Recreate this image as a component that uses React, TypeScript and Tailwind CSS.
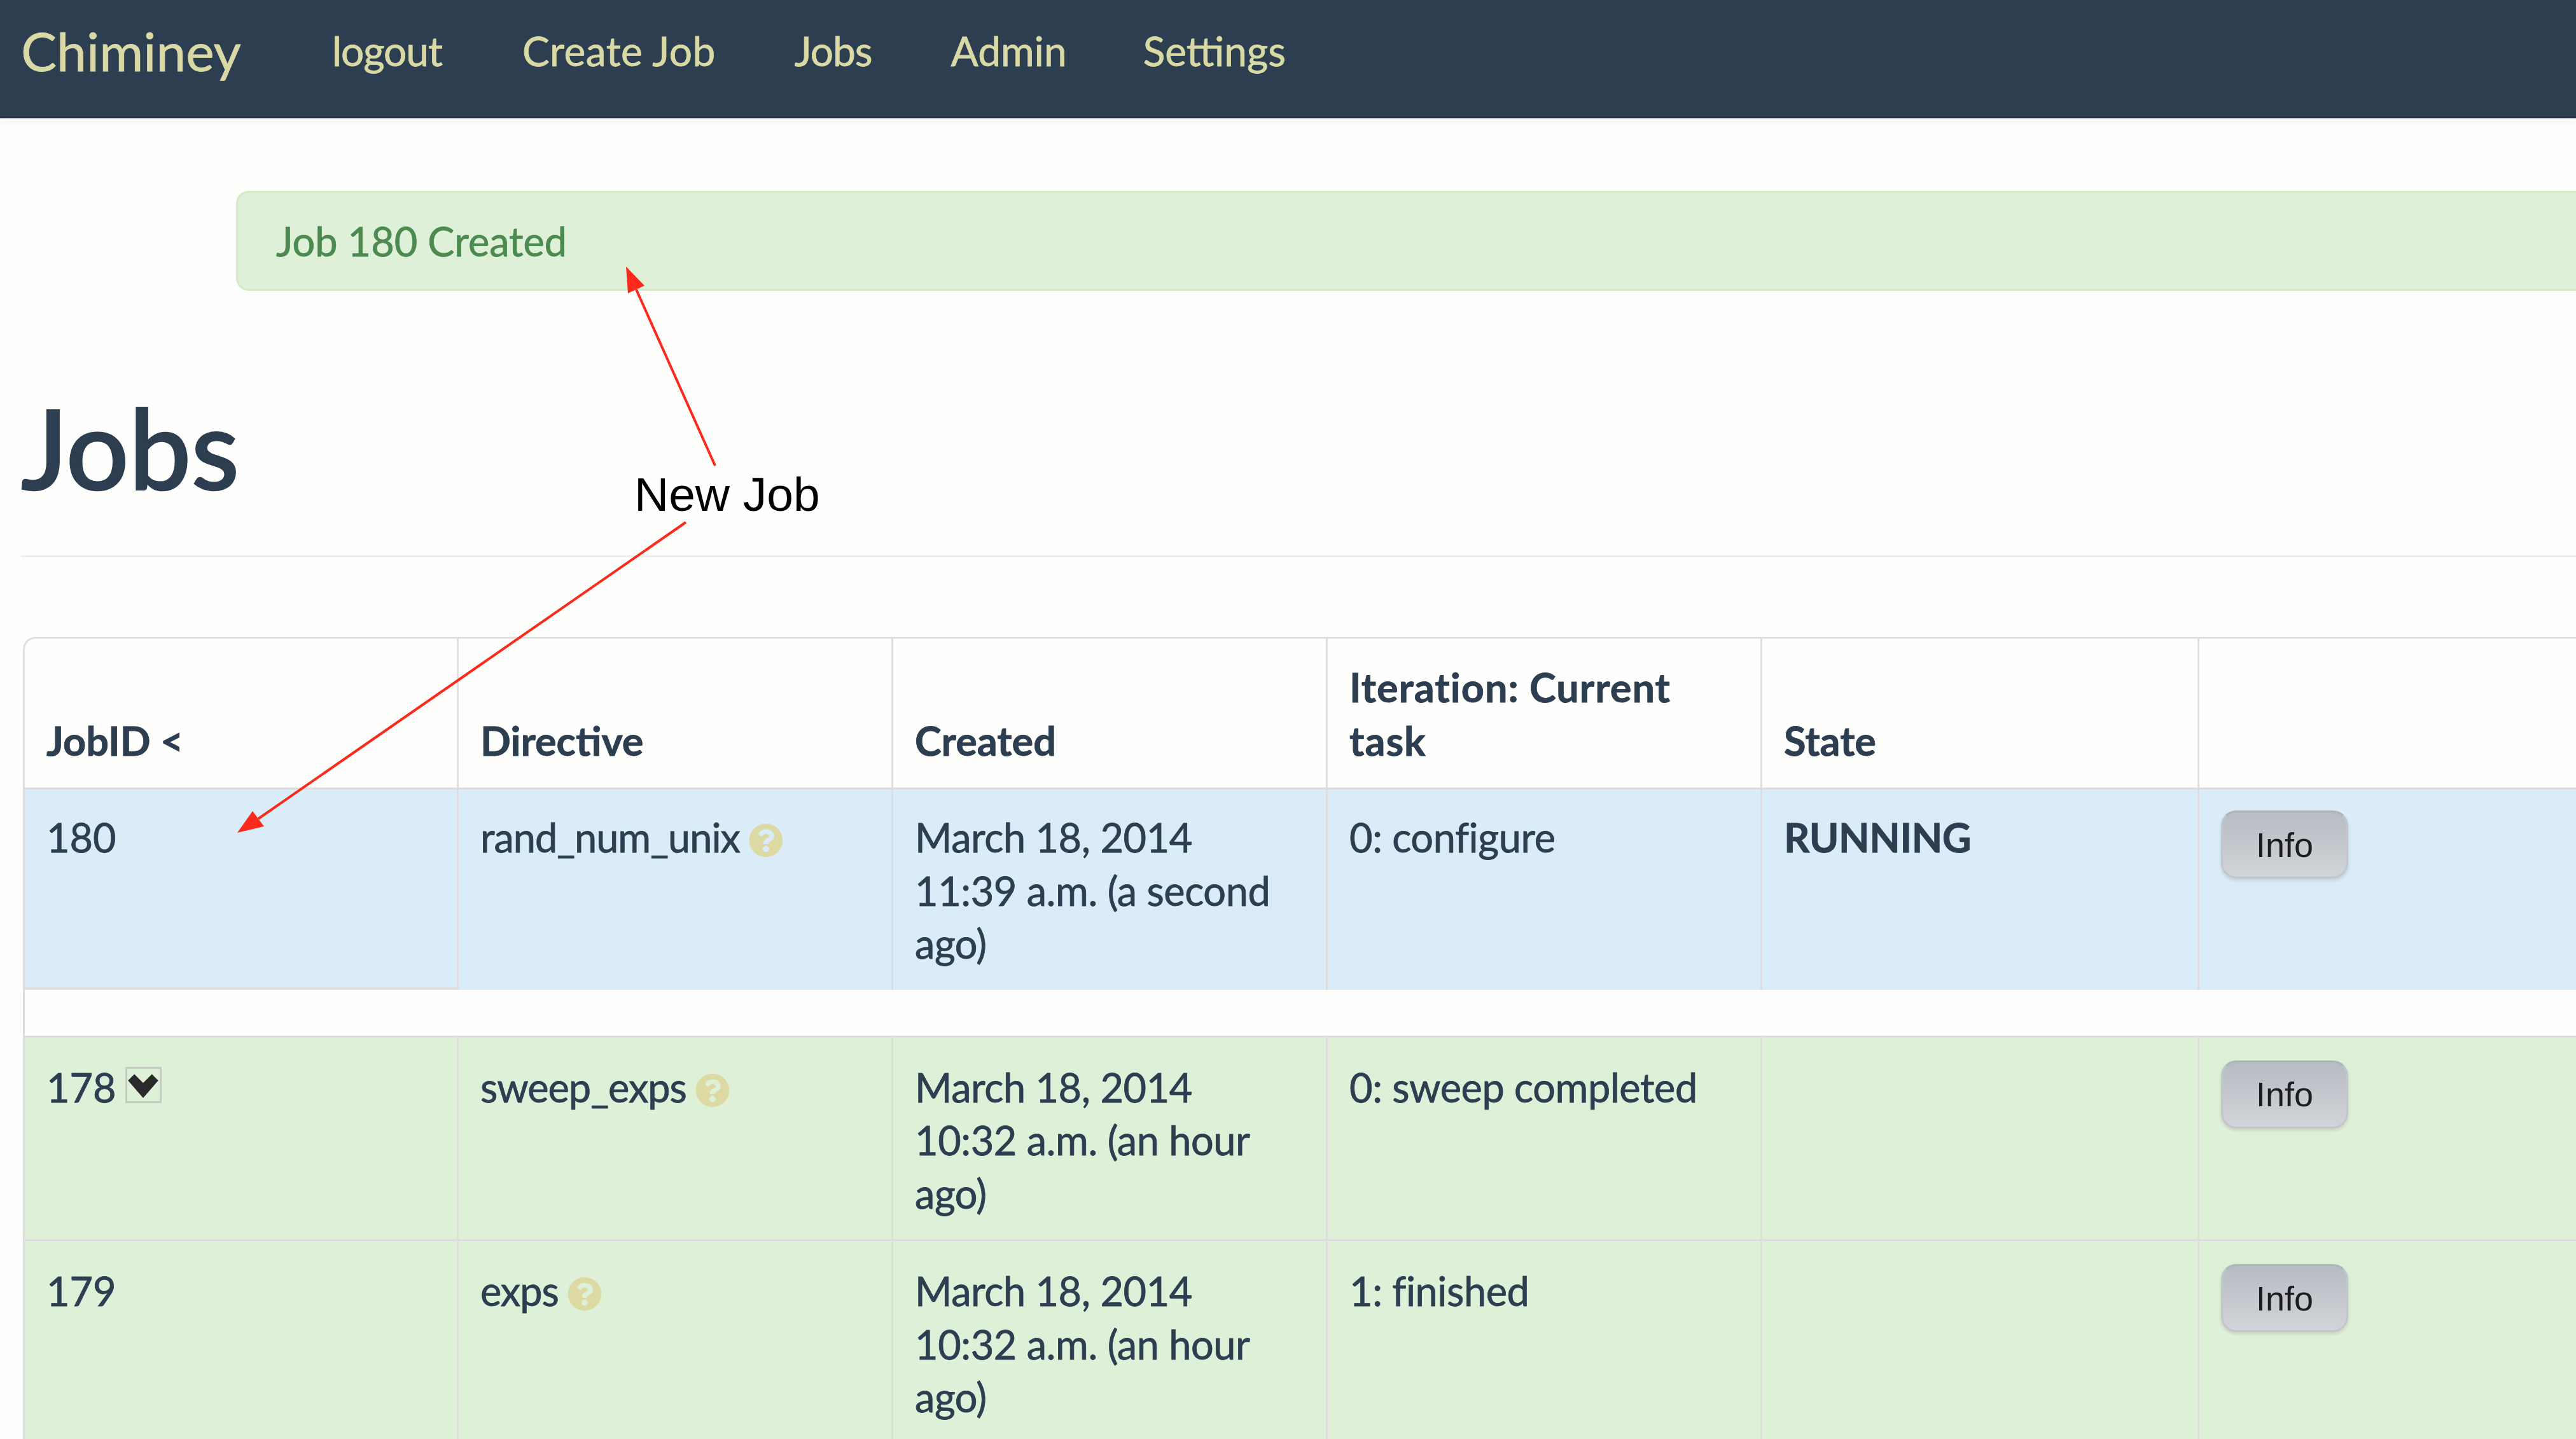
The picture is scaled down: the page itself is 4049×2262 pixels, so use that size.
import { FaQuestionCircle } from "react-icons/fa";

function Help() {
  return <FaQuestionCircle className="inline-block ml-[14px] w-[54px] h-[54px] text-[#dcd9a2] align-[-8px]" />;
}

function InfoButton() {
  return (
    <button className="w-[200px] h-[107px] rounded-[24px] border-[3px] border-[#c2c5ca] border-t-[#b0b3b9] bg-gradient-to-b from-[#b7bcc3] to-[#d1d4d8] shadow-[0_3px_5px_rgba(0,0,0,0.12)] text-[54px] leading-none text-[#1c1c1c] [font-family:'Liberation_Sans',sans-serif] [-webkit-text-stroke:0px]">
      Info
    </button>
  );
}

function Chevron() {
  return (
    <span className="inline-flex items-center justify-center w-[57px] h-[57px] ml-[14px] border-[3px] border-[#c8c8c8] align-[2px]">
      <svg viewBox="0 0 40 40" className="w-[50px] h-[50px]">
        <path d="M1 14 L9 6 L20 17 L31 6 L39 14 L20 36 Z" fill="#2a2a2a" />
      </svg>
    </span>
  );
}

const cell = "border-l-[3px] border-t-[3px] border-[#dddddd] px-[34px] pb-[31px] align-top";
const headCell = "border-l-[3px] border-t-[3px] border-[#e0e0e0] px-[34px] pb-[33px] align-bottom text-left font-bold";

type RowProps = {
  id: React.ReactNode;
  idCls?: string;
  pad: string;
  directive: string;
  created: string[];
  task: string;
  state?: string;
  bg: string;
};

function Row({ id, idCls = "", pad, directive, created, task, state, bg }: RowProps) {
  return (
    <tr className={bg}>
      <td className={`${cell} ${pad} ${idCls}`}>{id}</td>
      <td className={`${cell} ${pad}`}>
        <span className="tracking-[-1px]">{directive}</span>
        <Help />
      </td>
      <td className={`${cell} ${pad} tracking-[-0.4px]`}>
        {created.map((l) => (
          <div key={l}>{l}</div>
        ))}
      </td>
      <td className={`${cell} ${pad} tracking-[-0.4px]`}>{task}</td>
      <td className={`${cell} ${pad} font-bold tracking-[-0.4px]`}>{state}</td>
      <td className={`${cell} ${pad}`}>
        <InfoButton />
      </td>
    </tr>
  );
}

export default function App() {
  return (
    <div className="relative w-[4049px] h-[2262px] overflow-hidden bg-[#fefefc] text-[#2c3e50] text-[63px] leading-[83.5px] [font-family:Lato,sans-serif] [-webkit-text-stroke:0.8px_currentColor]">
      <nav className="flex items-center h-[186px] bg-[#2c3e50] border-b-[3px] border-[#253443] shadow-[0_6px_14px_rgba(0,0,0,0.05)] pl-[33px] pb-[24px] text-[#d9d9a6] text-[64px]">
        <span className="w-[489px] text-[84px] leading-none">Chiminey</span>
        <a className="mr-[126px] tracking-[-1px]">logout</a>
        <a className="mr-[124px] tracking-[0.5px]">Create Job</a>
        <a className="mr-[124px] tracking-[-1px]">Jobs</a>
        <a className="mr-[120px]">Admin</a>
        <a>Settings</a>
      </nav>

      <div className="ml-[371px] mt-[114px] w-[3900px] h-[157px] flex items-center pl-[60px] rounded-[20px] bg-[#dff0d8] border-[3px] border-[#d6e9c6] text-[#4c8a50]">
        Job 180 Created
      </div>

      <h1 className="mt-[151px] ml-[33px] text-[174px] leading-[190px] font-medium [-webkit-text-stroke:2.5px_currentColor]">Jobs</h1>
      <div className="mt-[75px] ml-[33px] h-[3px] bg-[#eeeeee]" />

      <table className="mt-[125px] ml-[36px] w-[4700px] table-fixed border-separate border-spacing-0">
        <thead>
          <tr className="h-[237px]">
            <th className={`${headCell} w-[682px] rounded-tl-[20px]`}>JobID &lt;</th>
            <th className={`${headCell} w-[683px]`}>Directive</th>
            <th className={`${headCell} w-[683px]`}>Created</th>
            <th className={`${headCell} w-[683px] tracking-[1px]`}>
              Iteration: Current
              <br />
              task
            </th>
            <th className={`${headCell} w-[687px]`}>State</th>
            <th className={headCell}></th>
          </tr>
        </thead>
        <tbody>
          <Row
            id="180"
            idCls="border-b-[4px]"
            pad="pt-[33px]"
            directive="rand_num_unix"
            created={["March 18, 2014", "11:39 a.m. (a second", "ago)"]}
            task="0: configure"
            state="RUNNING"
            bg="bg-[#d9ecf7]"
          />
          <tr className="h-[72px]">
            <td colSpan={6} className="border-l-[3px] border-[#dddddd]" />
          </tr>
          <Row
            id={
              <>
                178
                <Chevron />
              </>
            }
            pad="pt-[36px]"
            directive="sweep_exps"
            created={["March 18, 2014", "10:32 a.m. (an hour", "ago)"]}
            task="0: sweep completed"
            bg="bg-[#dff0d8]"
          />
          <Row
            id="179"
            pad="pt-[36px]"
            directive="exps"
            created={["March 18, 2014", "10:32 a.m. (an hour", "ago)"]}
            task="1: finished"
            bg="bg-[#dff0d8]"
          />
        </tbody>
      </table>

      <svg className="absolute left-0 top-0 pointer-events-none" width="4049" height="2262">
        <line x1="1124" y1="732" x2="1000" y2="455" stroke="#fc2a1c" strokeWidth="4" />
        <polygon points="984,419 1013,449 987,461" fill="#fc2a1c" />
        <line x1="1078" y1="821" x2="406" y2="1287" stroke="#fc2a1c" strokeWidth="4" />
        <polygon points="373,1309 397,1275 415,1299" fill="#fc2a1c" />
      </svg>
      <div className="absolute left-[997px] top-[735px] text-[75px] leading-[85px] text-black [font-family:'Liberation_Sans',sans-serif] [-webkit-text-stroke:0px]">
        New Job
      </div>
    </div>
  );
}
